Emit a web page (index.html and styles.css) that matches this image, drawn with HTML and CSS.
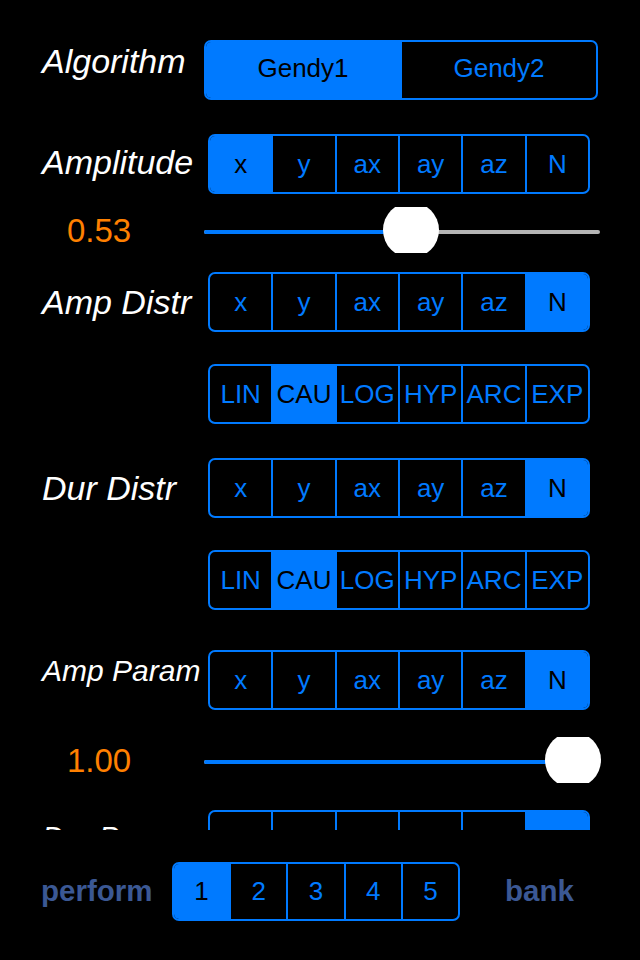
FILE: index.html
```html
<!DOCTYPE html>
<html>
<head>
<meta charset="utf-8">
<link rel="stylesheet" href="styles.css">
</head>
<body>
<div class="screen">
  <div class="scroll">
    <div class="row row-alg">
      <div class="label up9">Algorithm</div>
      <div class="seg seg-alg">
        <div class="s on">Gendy1</div>
        <div class="s">Gendy2</div>
      </div>
    </div>

    <div class="row row-amp">
      <div class="label up2">Amplitude</div>
      <div class="seg">
        <div class="s on">x</div><div class="s">y</div><div class="s">ax</div><div class="s">ay</div><div class="s">az</div><div class="s">N</div>
      </div>
    </div>

    <div class="srow srow-1">
      <div class="value">0.53</div>
      <div class="slider">
        <div class="track"><div class="fill" style="width: 207px"></div></div>
        <div class="thumb" style="left: 179px"></div>
      </div>
    </div>

    <div class="row row-ad">
      <div class="label">Amp Distr</div>
      <div class="seg">
        <div class="s">x</div><div class="s">y</div><div class="s">ax</div><div class="s">ay</div><div class="s">az</div><div class="s on">N</div>
      </div>
    </div>

    <div class="row row-dist">
      <div class="label"></div>
      <div class="seg seg-dist">
        <div class="s">LIN</div><div class="s on">CAU</div><div class="s">LOG</div><div class="s">HYP</div><div class="s">ARC</div><div class="s">EXP</div>
      </div>
    </div>

    <div class="row row-dd">
      <div class="label">Dur Distr</div>
      <div class="seg">
        <div class="s">x</div><div class="s">y</div><div class="s">ax</div><div class="s">ay</div><div class="s">az</div><div class="s on">N</div>
      </div>
    </div>

    <div class="row row-dist">
      <div class="label"></div>
      <div class="seg seg-dist">
        <div class="s">LIN</div><div class="s on">CAU</div><div class="s">LOG</div><div class="s">HYP</div><div class="s">ARC</div><div class="s">EXP</div>
      </div>
    </div>

    <div class="row row-ap">
      <div class="label small up9">Amp Param</div>
      <div class="seg">
        <div class="s">x</div><div class="s">y</div><div class="s">ax</div><div class="s">ay</div><div class="s">az</div><div class="s on">N</div>
      </div>
    </div>

    <div class="srow srow-2">
      <div class="value">1.00</div>
      <div class="slider">
        <div class="track"><div class="fill" style="width: 369px"></div></div>
        <div class="thumb" style="left: 341px"></div>
      </div>
    </div>

    <div class="row row-dp">
      <div class="label small up3">Dur Param</div>
      <div class="seg">
        <div class="s">x</div><div class="s">y</div><div class="s">ax</div><div class="s">ay</div><div class="s">az</div><div class="s on">N</div>
      </div>
    </div>
  </div>

  <div class="bottom">
    <div class="blabel">perform</div>
    <div class="seg seg-bank">
      <div class="s on">1</div><div class="s">2</div><div class="s">3</div><div class="s">4</div><div class="s">5</div>
    </div>
    <div class="blabel bank">bank</div>
  </div>
</div>
</body>
</html>
```

FILE: styles.css
```css
* { box-sizing: border-box; }
html, body {
  margin: 0;
  padding: 0;
  background: #000;
}
body {
  font-family: "Liberation Sans", Arial, sans-serif;
  color: #fff;
}
.screen {
  width: 640px;
  height: 960px;
  background: #000;
  overflow: hidden;
}
.scroll {
  height: 830px;
  overflow: hidden;
  padding-top: 40px;
}
.row {
  display: flex;
  align-items: center;
  height: 60px;
  padding-left: 42px;
}
.label {
  width: 166px;
  font-size: 34px;
  font-style: italic;
  line-height: 1;
  white-space: nowrap;
  color: #fff;
}
.label.small { font-size: 30px; }
.up9 { margin-bottom: 18px; }
.up3 { margin-bottom: 6px; }
.up2 { margin-bottom: 4px; }

.row-alg .label { width: 162px; }
.row-amp { margin-top: 34px; }
.row-ad { margin-top: 19px; }
.row-dist { margin-top: 32px; }
.row-dd { margin-top: 34px; }
.row-ap { margin-top: 40px; }
.row-dp { margin-top: 27px; }

.seg {
  display: flex;
  width: 382px;
  height: 60px;
  border: 2px solid #007aff;
  border-radius: 7px;
  overflow: hidden;
}
.seg-alg { width: 394px; }
.s {
  flex: 1 1 0;
  display: flex;
  align-items: center;
  justify-content: center;
  font-size: 26px;
  line-height: 1;
  color: #007aff;
  border-left: 2px solid #007aff;
  white-space: nowrap;
}
.s:first-child { border-left: none; }
.s.on {
  background: #007aff;
  color: #000;
}
.seg-alg .s { padding-bottom: 4px; }

.srow {
  display: flex;
  align-items: center;
  height: 46px;
}
.srow-1 { margin-top: 13px; }
.srow-2 { margin-top: 27px; }
.value {
  width: 204px;
  padding-left: 67px;
  font-size: 33px;
  line-height: 1;
  color: #ff8000;
}
.slider {
  position: relative;
  width: 396px;
  height: 46px;
}
.track {
  position: absolute;
  left: 0;
  right: 0;
  top: 23px;
  height: 4px;
  border-radius: 2px;
  background: #b5b5b5;
  overflow: hidden;
}
.fill {
  height: 4px;
  background: #007aff;
}
.thumb {
  position: absolute;
  top: 0;
  width: 56px;
  height: 46px;
  background: #fff;
  clip-path: circle(28px at 50% 50%);
}

.bottom {
  display: flex;
  align-items: center;
  height: 130px;
  padding-left: 41px;
  padding-bottom: 8px;
}
.blabel {
  font-size: 29.5px;
  font-weight: bold;
  line-height: 1;
  color: #3b5894;
  width: 131px;
}
.bank {
  margin-left: 45px;
}
.seg-bank {
  width: 288px;
  height: 59px;
}
```
